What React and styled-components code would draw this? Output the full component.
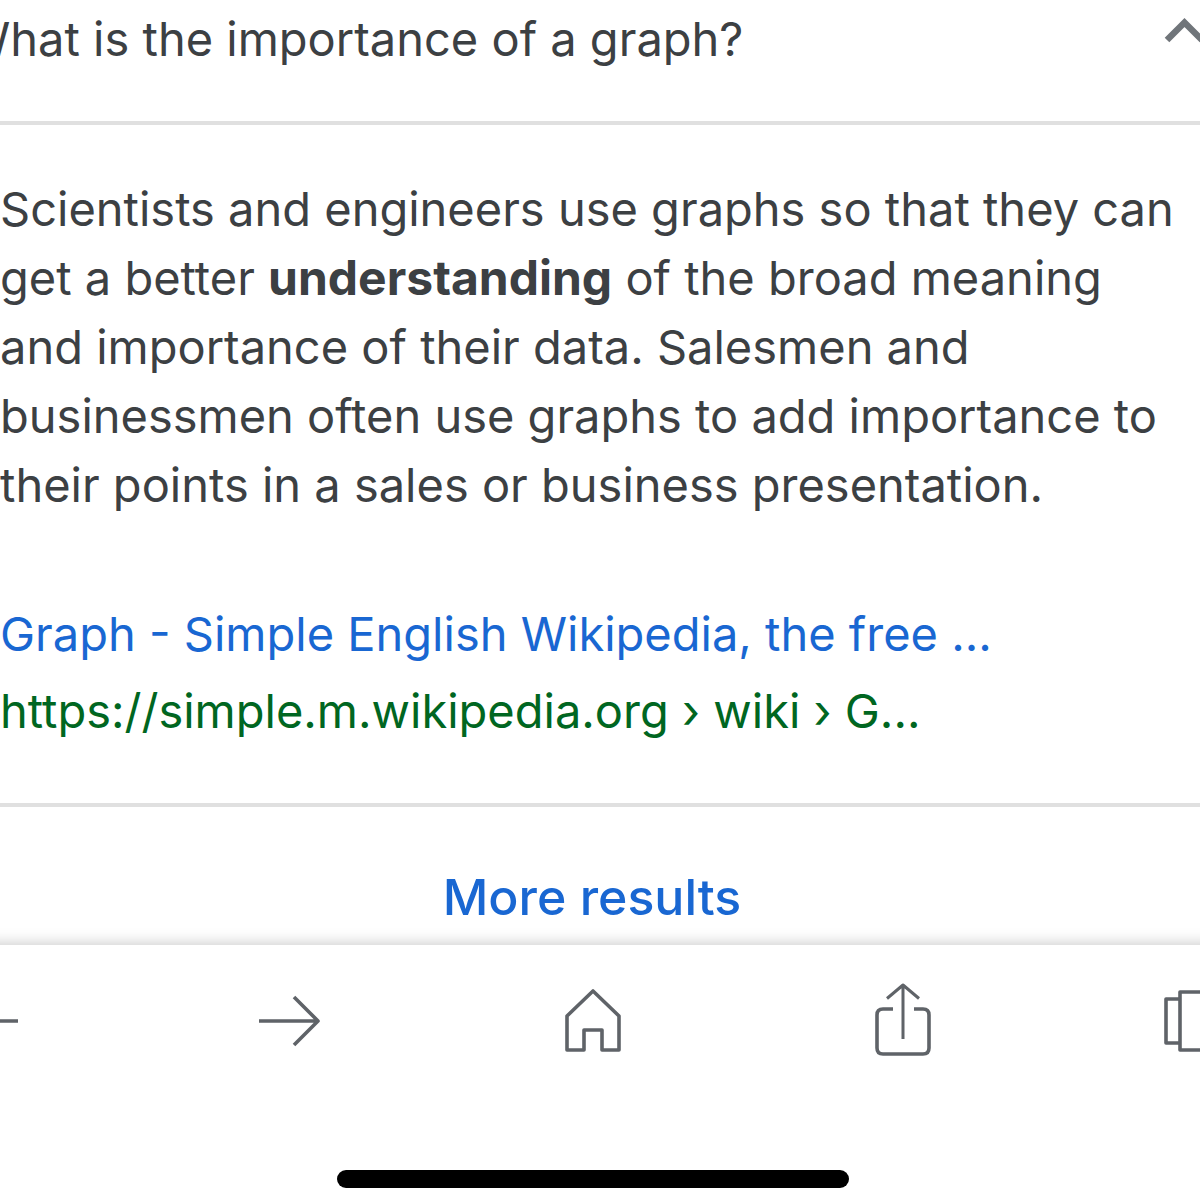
import styled, { createGlobalStyle } from "styled-components";

const GlobalStyle = createGlobalStyle`
  * {
    box-sizing: border-box;
  }
  body {
    margin: 0;
    background-color: #fff;
    color: #3c4043;
    font-family: Inter, "Liberation Sans", sans-serif;
    overflow-x: hidden;
  }
`;

const Page = styled.div`
  min-height: 100vh;
  display: flex;
  flex-direction: column;
  overflow: hidden;
`;

const Results = styled.main`
  display: flex;
  flex-direction: column;
  flex: 1;
`;

const Question = styled.button`
  display: flex;
  align-items: flex-start;
  justify-content: space-between;
  height: 125px;
  padding: 9px 0 0;
  margin: 0 -10px 0 -36px;
  border: 0;
  border-bottom: 4px solid #e0e0e0;
  background: none;
  color: inherit;
  font-family: inherit;
  font-size: 47px;
  line-height: 60px;
  white-space: nowrap;
`;

const Chevron = styled.svg`
  width: 48px;
  height: 48px;
  color: #70757a;
`;

const Answer = styled.p`
  margin: 49px 0 0;
  padding-right: 16px;
  font-size: 47px;
  line-height: 69px;
`;

const Highlight = styled.b`
  font-size: 48px;
  line-height: 60px;
`;

const Source = styled.div`
  display: flex;
  flex-direction: column;
  align-items: flex-start;
  padding: 76px 0 54px;
  border-bottom: 4px solid #e0e0e0;
`;

const SourceLink = styled.a`
  color: ${(props) => props.$color};
  font-size: 47px;
  line-height: 77px;
  text-decoration: none;
  white-space: nowrap;
`;

const MoreResults = styled.a`
  align-self: center;
  padding: 60px 16px 0 0;
  color: #1967d2;
  font-size: 50px;
  font-weight: 500;
  line-height: 60px;
  text-decoration: none;
`;

const BottomBar = styled.footer`
  height: 255px;
  display: flex;
  flex-direction: column;
  align-items: center;
  justify-content: space-between;
  padding: 34px 0 12px;
  background-color: #fff;
  box-shadow: 0 18px 14px 20px rgba(0, 0, 0, 0.2);
`;

const Toolbar = styled.nav`
  align-self: stretch;
  display: flex;
  justify-content: space-between;
  margin: 0 -44px 0 -52px;
`;

const ToolButton = styled.button`
  display: flex;
  padding: 0;
  border: 0;
  background: none;
  color: #5f6368;
`;

const HomeIndicator = styled.div`
  width: 512px;
  max-width: 80%;
  height: 18px;
  margin-right: 14px;
  border-radius: 9px;
  background-color: #000;
`;

const Icon = ({ children }) => (
  <svg
    width="80"
    height="80"
    viewBox="0 0 80 80"
    fill="none"
    stroke="currentColor"
    strokeWidth="3.6"
    strokeLinejoin="round"
    aria-hidden="true"
  >
    {children}
  </svg>
);

const App = () => {
  return (
    <Page>
      <GlobalStyle />
      <Results>
        <Question aria-expanded="true">
          <span>What is the importance of a graph?</span>
          <Chevron
            viewBox="0 0 48 48"
            fill="none"
            stroke="currentColor"
            strokeWidth="6.5"
            aria-hidden="true"
          >
            <path d="M5 31 22.500 13.500 40 31" />
          </Chevron>
        </Question>
        <Answer>
          Scientists and engineers use graphs so that they can get a better{" "}
          <Highlight>understanding</Highlight> of the broad meaning and
          importance of their data. Salesmen and businessmen often use graphs to
          add importance to their points in a sales or business presentation.
        </Answer>
        <Source>
          <SourceLink href="#graph" $color="#1967d2">
            Graph - Simple English Wikipedia, the free ...
          </SourceLink>
          <SourceLink href="#graph" $color="#006621">
            https://simple.m.wikipedia.org › wiki › G...
          </SourceLink>
        </Source>
        <MoreResults href="#more">More results</MoreResults>
      </Results>
      <BottomBar>
        <Toolbar>
          <ToolButton aria-label="Back">
            <Icon>
              <path d="M70 42H12M35 18 11 42l24 24" />
            </Icon>
          </ToolButton>
          <ToolButton aria-label="Forward">
            <Icon>
              <path d="M7 42h59M42 18l24 24-24 24" />
            </Icon>
          </ToolButton>
          <ToolButton aria-label="Home">
            <Icon>
              <path d="M11 37 37 12l26 25v34H46V51H28v20H11Z" />
            </Icon>
          </ToolButton>
          <ToolButton aria-label="Share">
            <Icon>
              <path d="M33 30H23q-6 0-6 6v33q0 6 6 6h40q6 0 6-6V36q0-6-6-6H54" />
              <path d="M43 60V6M27 19.500 43 6l16 13.500" strokeWidth="3" />
            </Icon>
          </ToolButton>
          <ToolButton aria-label="Tabs">
            <Icon>
              <path d="M16 20H2v44h14M16 13h42v58H16Z" />
            </Icon>
          </ToolButton>
        </Toolbar>
        <HomeIndicator />
      </BottomBar>
    </Page>
  );
};

export default App;
